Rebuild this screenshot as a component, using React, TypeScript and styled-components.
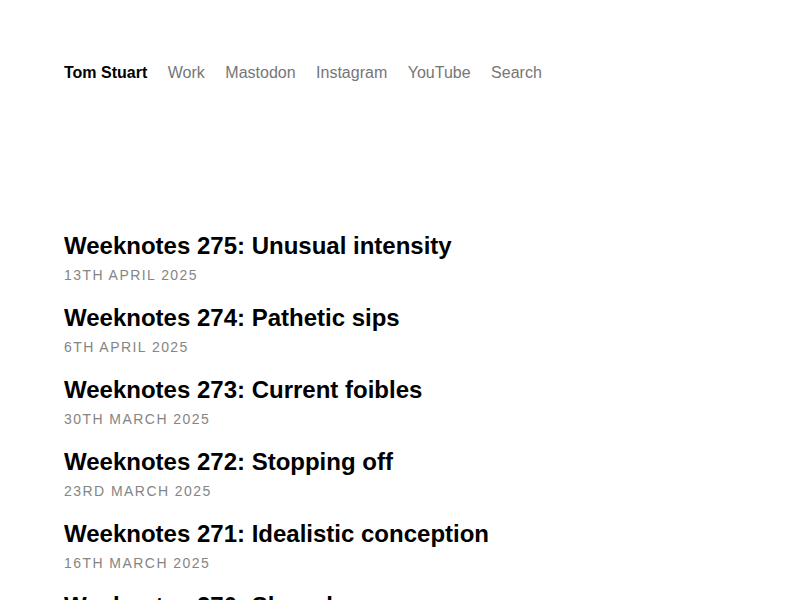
import React from 'react'
import styled, { createGlobalStyle } from 'styled-components'

const GlobalStyle = createGlobalStyle`
  html, body {
    margin: 0;
    padding: 0;
    background: #fff;
  }
  body {
    font-family: "Liberation Sans", Arial, sans-serif;
    color: #000;
  }
`

const posts = [
  { title: 'Weeknotes 275: Unusual intensity', date: '13th April 2025' },
  { title: 'Weeknotes 274: Pathetic sips', date: '6th April 2025' },
  { title: 'Weeknotes 273: Current foibles', date: '30th March 2025' },
  { title: 'Weeknotes 272: Stopping off', date: '23rd March 2025' },
  { title: 'Weeknotes 271: Idealistic conception', date: '16th March 2025' },
  { title: 'Weeknotes 270: Shared', date: '9th March 2025' },
]

const links = ['Work', 'Mastodon', 'Instagram', 'YouTube', 'Search']

const App: React.FC = () => {
  return (
    <Page>
      <GlobalStyle />
      <Nav>
        <Brand href="#">Tom Stuart</Brand>
        {links.map((l) => (
          <NavLink key={l} href="#">
            {l}
          </NavLink>
        ))}
      </Nav>

      <PostList>
        {posts.map((p) => (
          <Post key={p.title}>
            <PostTitle href="#">{p.title}</PostTitle>
            <PostDate>{p.date}</PostDate>
          </Post>
        ))}
      </PostList>
    </Page>
  )
}

export default App

const Page = styled.div`
  padding: 64px 64px 0;
  height: 600px;
  box-sizing: border-box;
  overflow: hidden;
`

const Nav = styled.nav`
  display: flex;
  align-items: baseline;
  gap: 20.5px;
  font-size: 16px;
  line-height: 18px;
`

const Brand = styled.a`
  font-weight: bold;
  color: #000;
  text-decoration: none;
`

const NavLink = styled.a`
  color: #767676;
  text-decoration: none;
`

const PostList = styled.ul`
  list-style: none;
  margin: 149px 0 0;
  padding: 0;
  display: flex;
  flex-direction: column;
  gap: 16px;
`

const Post = styled.li`
  display: flex;
  flex-direction: column;
`

const PostTitle = styled.a`
  font-size: 24px;
  font-weight: bold;
  line-height: 30px;
  color: #000;
  text-decoration: none;
`

const PostDate = styled.time`
  font-size: 14px;
  line-height: 26px;
  margin-top: 1px;
  margin-bottom: -1px;
  letter-spacing: 1.45px;
  text-transform: uppercase;
  color: #858585;
`
